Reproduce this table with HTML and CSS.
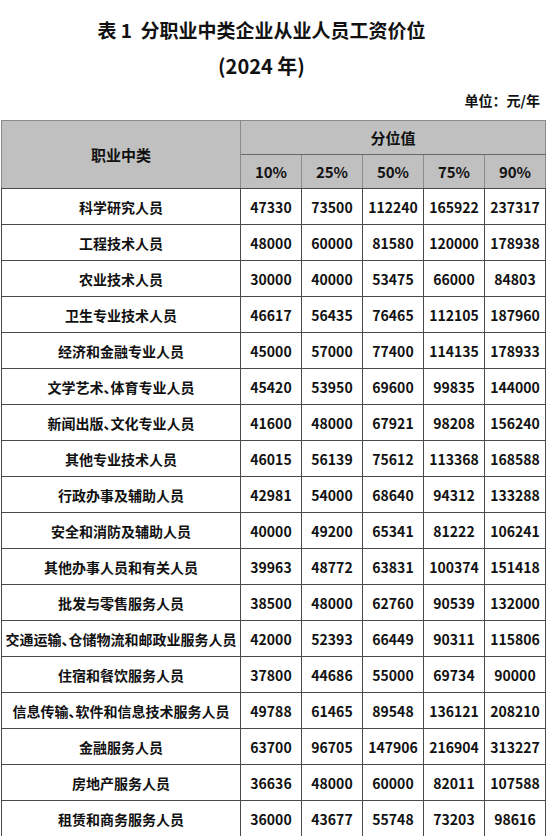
FILE: index.html
```html
<!DOCTYPE html>
<html lang="zh-CN">
<head>
<meta charset="utf-8">
<title>表1 分职业中类企业从业人员工资价位</title>
<link rel="stylesheet" href="styles.css">
</head>
<body>
<div class="page">
  <h1 class="title">表 1&nbsp;&nbsp;分职业中类企业从业人员工资价位</h1>
  <div class="subtitle">(2024 年)</div>
  <div class="unit">单位：元/年</div>
  <table class="wage">
    <colgroup>
      <col class="c-name"><col class="c-num"><col class="c-num"><col class="c-num"><col class="c-num"><col class="c-num last">
    </colgroup>
    <thead>
      <tr class="h1">
        <th rowspan="2" class="hname">职业中类</th>
        <th colspan="5" class="hgroup">分位值</th>
      </tr>
      <tr class="h2">
        <th class="first">10%</th><th>25%</th><th>50%</th><th>75%</th><th>90%</th>
      </tr>
    </thead>
    <tbody>
      <tr><td>科学研究人员</td><td>47330</td><td>73500</td><td>112240</td><td>165922</td><td>237317</td></tr>
      <tr><td>工程技术人员</td><td>48000</td><td>60000</td><td>81580</td><td>120000</td><td>178938</td></tr>
      <tr><td>农业技术人员</td><td>30000</td><td>40000</td><td>53475</td><td>66000</td><td>84803</td></tr>
      <tr><td>卫生专业技术人员</td><td>46617</td><td>56435</td><td>76465</td><td>112105</td><td>187960</td></tr>
      <tr><td>经济和金融专业人员</td><td>45000</td><td>57000</td><td>77400</td><td>114135</td><td>178933</td></tr>
      <tr><td>文学艺术、体育专业人员</td><td>45420</td><td>53950</td><td>69600</td><td>99835</td><td>144000</td></tr>
      <tr><td>新闻出版、文化专业人员</td><td>41600</td><td>48000</td><td>67921</td><td>98208</td><td>156240</td></tr>
      <tr><td>其他专业技术人员</td><td>46015</td><td>56139</td><td>75612</td><td>113368</td><td>168588</td></tr>
      <tr><td>行政办事及辅助人员</td><td>42981</td><td>54000</td><td>68640</td><td>94312</td><td>133288</td></tr>
      <tr><td>安全和消防及辅助人员</td><td>40000</td><td>49200</td><td>65341</td><td>81222</td><td>106241</td></tr>
      <tr><td>其他办事人员和有关人员</td><td>39963</td><td>48772</td><td>63831</td><td>100374</td><td>151418</td></tr>
      <tr><td>批发与零售服务人员</td><td>38500</td><td>48000</td><td>62760</td><td>90539</td><td>132000</td></tr>
      <tr><td>交通运输、仓储物流和邮政业服务人员</td><td>42000</td><td>52393</td><td>66449</td><td>90311</td><td>115806</td></tr>
      <tr><td>住宿和餐饮服务人员</td><td>37800</td><td>44686</td><td>55000</td><td>69734</td><td>90000</td></tr>
      <tr><td>信息传输、软件和信息技术服务人员</td><td>49788</td><td>61465</td><td>89548</td><td>136121</td><td>208210</td></tr>
      <tr><td>金融服务人员</td><td>63700</td><td>96705</td><td>147906</td><td>216904</td><td>313227</td></tr>
      <tr><td>房地产服务人员</td><td>36636</td><td>48000</td><td>60000</td><td>82011</td><td>107588</td></tr>
      <tr><td>租赁和商务服务人员</td><td>36000</td><td>43677</td><td>55748</td><td>73203</td><td>98616</td></tr>
    </tbody>
  </table>
</div>
</body>
</html>
```

FILE: styles.css
```css
html, body {
  margin: 0;
  padding: 0;
  background: #ffffff;
}

body {
  font-family: "Noto Sans CJK SC", "Noto Sans", sans-serif;
  color: #111111;
}

.page {
  width: 547px;
  padding-top: 12px;
}

.title {
  margin: 0;
  font-size: 19px;
  line-height: 36px;
  font-weight: 700;
  text-align: center;
  padding-right: 24px;
}

.subtitle {
  font-size: 20px;
  line-height: 36px;
  font-weight: 700;
  text-align: center;
  padding-right: 24px;
}

.unit {
  margin-top: 6px;
  font-size: 14px;
  line-height: 20px;
  font-weight: 700;
  text-align: right;
  padding-right: 7px;
}

.wage {
  margin: 10px 0 0 1px;
  width: 544px;
  border-collapse: collapse;
  table-layout: fixed;
  border: 1px solid #4a4a4a;
}

.c-name { width: 239px; }
.c-num { width: 61px; }

.wage th {
  background: #c0c0c0;
  font-size: 15px;
  font-weight: 700;
  height: 33px;
  padding: 0;
  text-align: center;
  vertical-align: middle;
  border: 1px solid #8a8a8a;
}

.wage th.hname {
  border-right: 1px solid #8a8a8a;
  border-bottom: 1px solid #4a4a4a;
}

.wage th.hgroup {
  border-bottom: 1px solid #6a6a6a;
}

.wage .h2 th {
  border-bottom: 1px solid #4a4a4a;
}

.wage td {
  height: 35px;
  padding: 0;
  font-size: 14px;
  font-weight: 700;
  text-align: center;
  vertical-align: middle;
  border: 1px solid #4a4a4a;
  white-space: nowrap;
  font-feature-settings: "halt" 0;
}

.wage td:first-child {
  font-feature-settings: "halt" 1;
}
```
